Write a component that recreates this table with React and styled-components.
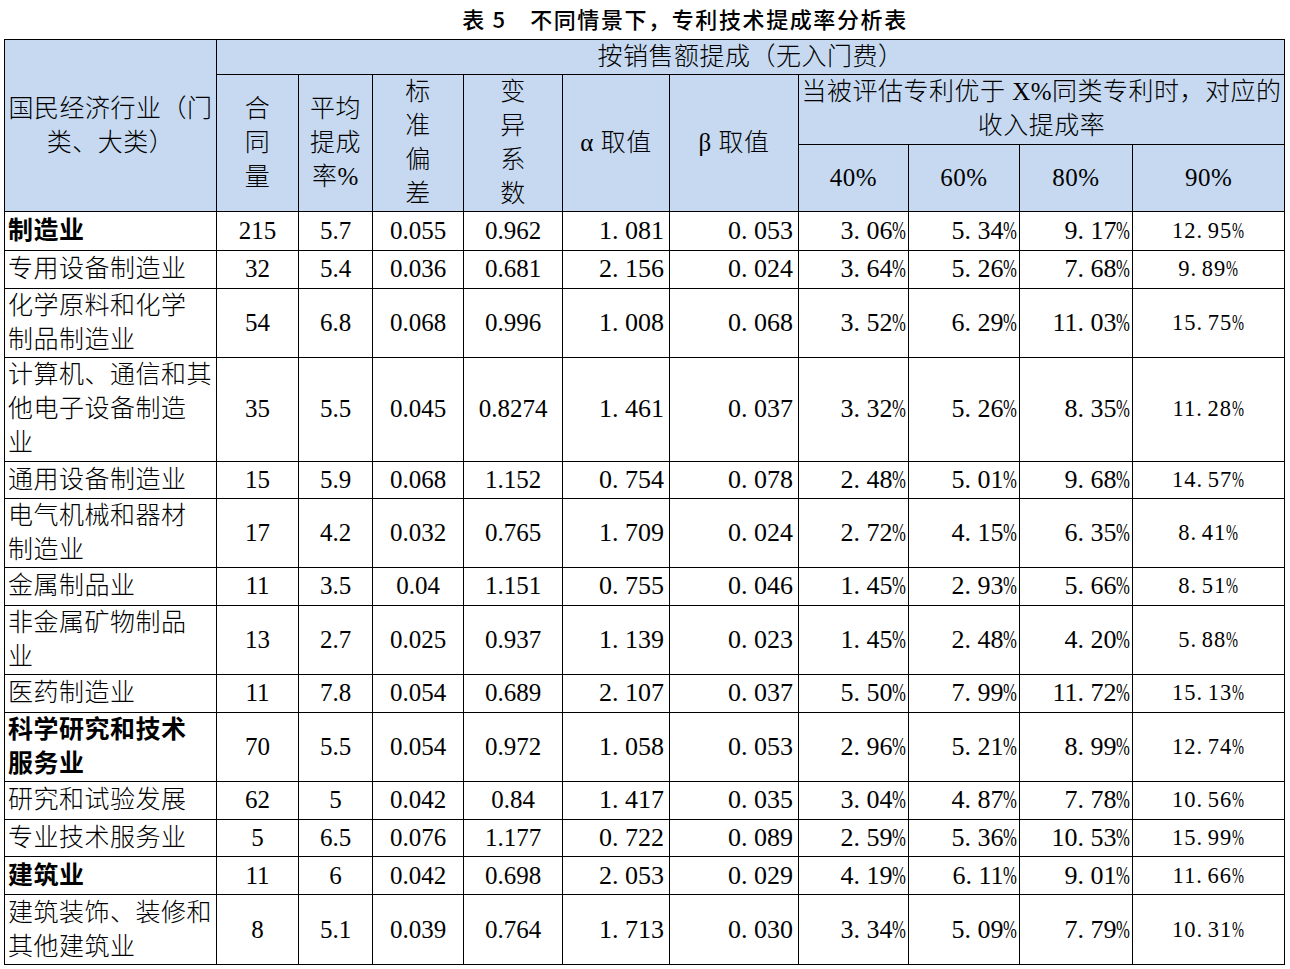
import styled, { createGlobalStyle } from 'styled-components';

const GlobalStyle = createGlobalStyle`
  html, body {
    margin: 0;
    padding: 0;
    background: #fff;
  }
  body {
    font-family: "Liberation Serif", "Noto Sans CJK SC", serif;
    color: #000;
  }
`;

const Page = styled.div`
  width: 1290px;
  padding-left: 4px;
  box-sizing: border-box;
`;

const Title = styled.div`
  height: 39px;
  line-height: 36px;
  padding-left: 76px;
  text-align: center;
  font-family: "Noto Sans CJK SC", sans-serif;
  font-size: 22px;
  font-weight: 500;
  letter-spacing: 1.6px;
  white-space: nowrap;
`;

const Table = styled.table`
  border-collapse: collapse;
  table-layout: fixed;
  width: 1280px;
`;

const HeadRow = styled.tr`
  height: ${p => p.$h}px;
`;

const BodyRow = styled.tr`
  height: ${p => p.$h}px;
`;

const HeadCell = styled.th`
  background: #c6d9f1;
  border: 1px solid #000;
  padding: 0 2px;
  font-weight: 300;
  font-size: 25px;
  line-height: 34px;
  letter-spacing: 0.5px;
  text-align: center;
  vertical-align: middle;
  white-space: nowrap;
  overflow: hidden;
`;

const NameCell = styled.td`
  border: 1px solid #000;
  padding: 0 0 0 3px;
  font-size: 25px;
  line-height: 34px;
  letter-spacing: 0.5px;
  font-weight: ${p => (p.$bold ? 700 : 300)};
  text-align: left;
  vertical-align: middle;
  white-space: nowrap;
  overflow: hidden;
`;

const NumCell = styled.td`
  border: 1px solid #000;
  padding: 0 ${p => p.$pr || 0}px 0 0;
  font-size: ${p => p.$size || 25}px;
  letter-spacing: ${p => p.$ls || 0}px;
  line-height: 34px;
  text-align: ${p => p.$align || 'center'};
  vertical-align: middle;
  white-space: nowrap;
`;

const Dot = styled.span`
  display: inline-block;
  width: 0.5em;
  text-align: left;
`;

const Pct = styled.span`
  display: inline-block;
  width: 0.52em;
  letter-spacing: 0;
  transform: scaleX(0.64);
  transform-origin: left center;
`;

const Lines = ({ lines }) =>
  lines.map((l, i) => (
    <span key={i}>
      {i > 0 && <br />}
      {l}
    </span>
  ));

// 宋体风格的数字：小数点、百分号各占半个字宽
const WideNum = ({ value }) =>
  value.split('').map((c, i) => {
    if (c === '.') return <Dot key={i}>.</Dot>;
    if (c === '%') return <Pct key={i}>%</Pct>;
    return <span key={i}>{c}</span>;
  });

const widths = [212, 82, 74, 91, 99, 107, 129, 110, 111, 113, 152];

const rows = [
  { name: ['制造业'], bold: true, h: 38.5, n: '215', avg: '5.7', sd: '0.055', cv: '0.962', a: '1.081', b: '0.053', p: ['3.06%', '5.34%', '9.17%', '12.95%'] },
  { name: ['专用设备制造业'], h: 38.5, n: '32', avg: '5.4', sd: '0.036', cv: '0.681', a: '2.156', b: '0.024', p: ['3.64%', '5.26%', '7.68%', '9.89%'] },
  { name: ['化学原料和化学', '制品制造业'], h: 68, n: '54', avg: '6.8', sd: '0.068', cv: '0.996', a: '1.008', b: '0.068', p: ['3.52%', '6.29%', '11.03%', '15.75%'] },
  { name: ['计算机、通信和其', '他电子设备制造', '业'], h: 103.5, n: '35', avg: '5.5', sd: '0.045', cv: '0.8274', a: '1.461', b: '0.037', p: ['3.32%', '5.26%', '8.35%', '11.28%'] },
  { name: ['通用设备制造业'], h: 37.5, n: '15', avg: '5.9', sd: '0.068', cv: '1.152', a: '0.754', b: '0.078', p: ['2.48%', '5.01%', '9.68%', '14.57%'] },
  { name: ['电气机械和器材', '制造业'], h: 69, n: '17', avg: '4.2', sd: '0.032', cv: '0.765', a: '1.709', b: '0.024', p: ['2.72%', '4.15%', '6.35%', '8.41%'] },
  { name: ['金属制品业'], h: 37.5, n: '11', avg: '3.5', sd: '0.04', cv: '1.151', a: '0.755', b: '0.046', p: ['1.45%', '2.93%', '5.66%', '8.51%'] },
  { name: ['非金属矿物制品', '业'], h: 69, n: '13', avg: '2.7', sd: '0.025', cv: '0.937', a: '1.139', b: '0.023', p: ['1.45%', '2.48%', '4.20%', '5.88%'] },
  { name: ['医药制造业'], h: 38.5, n: '11', avg: '7.8', sd: '0.054', cv: '0.689', a: '2.107', b: '0.037', p: ['5.50%', '7.99%', '11.72%', '15.13%'] },
  { name: ['科学研究和技术', '服务业'], bold: true, h: 69, n: '70', avg: '5.5', sd: '0.054', cv: '0.972', a: '1.058', b: '0.053', p: ['2.96%', '5.21%', '8.99%', '12.74%'] },
  { name: ['研究和试验发展'], h: 37.5, n: '62', avg: '5', sd: '0.042', cv: '0.84', a: '1.417', b: '0.035', p: ['3.04%', '4.87%', '7.78%', '10.56%'] },
  { name: ['专业技术服务业'], h: 37.5, n: '5', avg: '6.5', sd: '0.076', cv: '1.177', a: '0.722', b: '0.089', p: ['2.59%', '5.36%', '10.53%', '15.99%'] },
  { name: ['建筑业'], bold: true, h: 38, n: '11', avg: '6', sd: '0.042', cv: '0.698', a: '2.053', b: '0.029', p: ['4.19%', '6.11%', '9.01%', '11.66%'] },
  { name: ['建筑装饰、装修和', '其他建筑业'], h: 70, n: '8', avg: '5.1', sd: '0.039', cv: '0.764', a: '1.713', b: '0.030', p: ['3.34%', '5.09%', '7.79%', '10.31%'] },
];

const App = () => (
  <Page>
    <GlobalStyle />
    <Title>表 5　不同情景下，专利技术提成率分析表</Title>
    <Table>
      <colgroup>
        {widths.map((w, i) => (
          <col key={i} style={{ width: w }} />
        ))}
      </colgroup>
      <thead>
        <HeadRow $h={35}>
          <HeadCell rowSpan={3}>
            <Lines lines={['国民经济行业（门', '类、大类）']} />
          </HeadCell>
          <HeadCell colSpan={10}>按销售额提成（无入门费）</HeadCell>
        </HeadRow>
        <HeadRow $h={69}>
          <HeadCell rowSpan={2}><Lines lines={['合', '同', '量']} /></HeadCell>
          <HeadCell rowSpan={2}><Lines lines={['平均', '提成', '率%']} /></HeadCell>
          <HeadCell rowSpan={2}><Lines lines={['标', '准', '偏', '差']} /></HeadCell>
          <HeadCell rowSpan={2}><Lines lines={['变', '异', '系', '数']} /></HeadCell>
          <HeadCell rowSpan={2}>α 取值</HeadCell>
          <HeadCell rowSpan={2}>β 取值</HeadCell>
          <HeadCell colSpan={4}>
            <Lines lines={['当被评估专利优于 X%同类专利时，对应的', '收入提成率']} />
          </HeadCell>
        </HeadRow>
        <HeadRow $h={67}>
          <HeadCell>40%</HeadCell>
          <HeadCell>60%</HeadCell>
          <HeadCell>80%</HeadCell>
          <HeadCell>90%</HeadCell>
        </HeadRow>
      </thead>
      <tbody>
        {rows.map((r, i) => (
          <BodyRow key={i} $h={r.h}>
            <NameCell $bold={r.bold}>
              <Lines lines={r.name} />
            </NameCell>
            <NumCell>{r.n}</NumCell>
            <NumCell>{r.avg}</NumCell>
            <NumCell>{r.sd}</NumCell>
            <NumCell>{r.cv}</NumCell>
            <NumCell $align="right" $pr={5} $size={26}><WideNum value={r.a} /></NumCell>
            <NumCell $align="right" $pr={5} $size={26}><WideNum value={r.b} /></NumCell>
            <NumCell $align="right" $pr={2} $size={26}><WideNum value={r.p[0]} /></NumCell>
            <NumCell $align="right" $pr={2} $size={26}><WideNum value={r.p[1]} /></NumCell>
            <NumCell $align="right" $pr={2} $size={26}><WideNum value={r.p[2]} /></NumCell>
            <NumCell $size={22.5} $ls={1} $pr={1}><WideNum value={r.p[3]} /></NumCell>
          </BodyRow>
        ))}
      </tbody>
    </Table>
  </Page>
);

export default App;
